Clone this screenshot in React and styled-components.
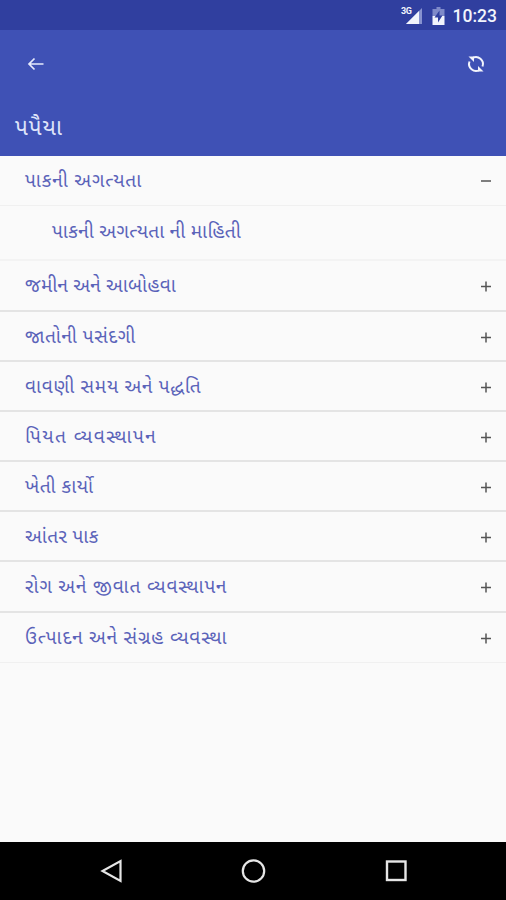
import React, { useState } from 'react'
import styled, { createGlobalStyle } from 'styled-components'

const GlobalStyle = createGlobalStyle`
    * {
        box-sizing: border-box;
    }

    body {
        margin: 0;
        background-color: #fafafa;
        font-family: Roboto, "Noto Sans Gujarati", "Noto Sans", sans-serif;
    }
`

const Screen = styled.div`
    display: flex;
    flex-direction: column;
    height: 900px;
    overflow: hidden;
    background-color: #fafafa;
`

const StatusBar = styled.div`
    display: flex;
    flex: none;
    align-items: center;
    justify-content: flex-end;
    height: 30px;
    padding: 2px 9px 0 0;
    background-color: #303f9f;
`

const Clock = styled.span`
    margin-left: 8px;
    color: #f2f4fc;
    font-size: 17.5px;
    font-weight: 500;
    line-height: 28px;
`

const Header = styled.header`
    flex: none;
    height: 126px;
    background-color: #3f51b5;
`

const Toolbar = styled.div`
    display: flex;
    align-items: center;
    justify-content: space-between;
    height: 68px;
    padding: 0 20px 0 26px;
`

const IconButton = styled.button`
    display: flex;
    padding: 0;
    border: none;
    background: none;
    cursor: pointer;
`

const Title = styled.h1`
    margin: 0;
    padding: 15px 0 0 15px;
    color: #dfe4fa;
    font-size: 22.5px;
    font-weight: 400;
    letter-spacing: 1px;
    line-height: 28px;
`

const List = styled.div`
    flex: 1;
`

const Row = styled.div`
    display: flex;
    align-items: center;
    justify-content: space-between;
    height: ${props => props.$height}px;
    padding: 1px 14px 0 25px;
    border-bottom: ${props => (props.$strong ? '2px solid #e4e4e4' : '1px solid #f0f0f0')};
    cursor: pointer;
`

const Label = styled.span`
    color: #5a63b9;
    font-size: 19px;
    letter-spacing: ${props => props.$spacing}px;
    line-height: 24px;
    white-space: nowrap;
`

const SubRow = styled.div`
    display: flex;
    align-items: center;
    height: 55px;
    padding: 0 0 1px 52px;
    border-bottom: 2px solid #f3f3f3;
`

const NavBar = styled.nav`
    display: flex;
    flex: none;
    align-items: center;
    justify-content: space-between;
    height: 58px;
    padding: 0 96px 0 99px;
    background-color: #000000;
`

const crops = [
    { name: 'પાકની અગત્યતા', spacing: 0.9, info: 'પાકની અગત્યતા ની માહિતી', infoSpacing: 0.4 },
    { name: 'જમીન અને આબોહવા', spacing: 0.3 },
    { name: 'જાતોની પસંદગી', spacing: 0.6 },
    { name: 'વાવણી સમય અને પદ્ધતિ', spacing: 0.8 },
    { name: 'પિયત વ્યવસ્થાપન', spacing: 1.5 },
    { name: 'ખેતી કાર્યો', spacing: 0.55 },
    { name: 'આંતર પાક', spacing: 0.4 },
    { name: 'રોગ અને જીવાત વ્યવસ્થાપન', spacing: 0.9 },
    { name: 'ઉત્પાદન અને સંગ્રહ વ્યવસ્થા', spacing: 0.9 },
]

function SignalIcon() {
    return (
        <svg width="24" height="20" viewBox="0 0 24 20">
            <text x="0" y="8" fill="#f2f4fc" fontSize="9" fontWeight="700" fontFamily="Roboto" textLength="11">3G</text>
            <path d="M21 2 V18 H5 Z" fill="#8792cf" />
            <path d="M18 5 V18 H5 Z" fill="#f2f4fc" />
        </svg>
    )
}

function BatteryIcon() {
    return (
        <svg width="20" height="20" viewBox="1 0 20 20">
            <path d="M12.500 1 h4 v2 h4 v7 h-12 V3 h4 Z" fill="#7f8ac9" />
            <path d="M8.500 10 h12 v9 h-12 Z" fill="#f2f4fc" />
            <path d="M15.500 4.500 L10.500 11.500 h3.500 v5 L18.500 9.500 H15.500 Z" fill="#303f9f" />
        </svg>
    )
}

function BackArrow() {
    return (
        <svg width="20" height="16" viewBox="0 0 20 16" fill="none" stroke="#e6eafc" strokeWidth="1.700">
            <path d="M17.500 8 H3.500 M8.500 2.500 L3 8 L8.500 13.500" />
        </svg>
    )
}

function SyncIcon() {
    return (
        <svg width="20" height="20" viewBox="0 0 20 20" fill="none" stroke="#f2f4fc" strokeWidth="2">
            <path d="M6.500 4 A7 7 0 0 1 16.500 12.500" />
            <path d="M13.500 16 A7 7 0 0 1 3.500 7.500" />
            <path d="M2.500 2.500 H8 V8 Z" fill="#f2f4fc" stroke="none" />
            <path d="M17.500 17.500 H12 V12 Z" fill="#f2f4fc" stroke="none" />
        </svg>
    )
}

function Toggle({ open }) {
    return (
        <svg width="12" height="12" viewBox="0 0 12 12" fill="none" stroke="#555555" strokeWidth="1.500">
            <path d={open ? 'M1 6 H11' : 'M1 6.500 H11 M6 1.500 V11.500'} />
        </svg>
    )
}

function App() {
    const [opened, setOpened] = useState(0)

    return (
        <Screen>
            <GlobalStyle />
            <StatusBar>
                <SignalIcon />
                <BatteryIcon />
                <Clock>10:23</Clock>
            </StatusBar>
            <Header>
                <Toolbar>
                    <IconButton aria-label="Back"><BackArrow /></IconButton>
                    <IconButton aria-label="Refresh"><SyncIcon /></IconButton>
                </Toolbar>
                <Title>પપૈયા</Title>
            </Header>
            <List>
                {crops.map((crop, index) => (
                    <React.Fragment key={crop.name}>
                        <Row
                            $height={index === 0 ? 50 : index === 1 ? 51 : 50.1}
                            $strong={index > 0 && index < crops.length - 1}
                            onClick={() => setOpened(opened === index ? -1 : index)}
                        >
                            <Label $spacing={crop.spacing}>{crop.name}</Label>
                            <Toggle open={opened === index} />
                        </Row>
                        {opened === index && crop.info ?
                            (<SubRow><Label $spacing={crop.infoSpacing}>{crop.info}</Label></SubRow>) : ('')}
                    </React.Fragment>
                ))}
            </List>
            <NavBar>
                <svg width="24" height="28" viewBox="0 0 24 28" fill="none" stroke="#e6e6e6" strokeWidth="2.200">
                    <path d="M21.500 4 V24 L3.500 14 Z" />
                </svg>
                <svg width="28" height="28" viewBox="-0.500 0 28 28" fill="none" stroke="#e6e6e6" strokeWidth="2.200">
                    <circle cx="14" cy="14" r="10.700" />
                </svg>
                <svg width="28" height="28" viewBox="0 0 28 28" fill="none" stroke="#e6e6e6" strokeWidth="2.400">
                    <rect x="5" y="4.500" width="18.500" height="18.500" />
                </svg>
            </NavBar>
        </Screen>
    )
}

export default App
